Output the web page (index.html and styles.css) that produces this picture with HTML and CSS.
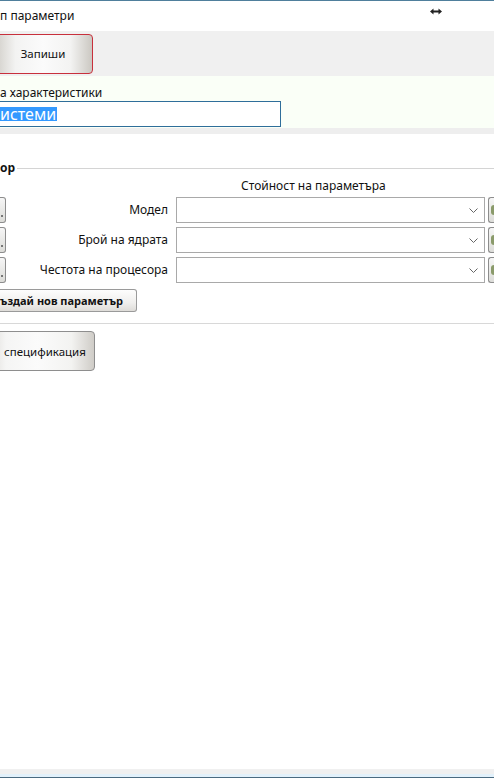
FILE: index.html
```html
<!DOCTYPE html>
<html lang="bg">
<head>
<meta charset="utf-8">
<title>Параметри</title>
<link rel="stylesheet" href="styles.css">
</head>
<body>
<div class="window">
  <div class="titlebar">
    <span class="title">п параметри</span>
    <svg class="resize" width="12" height="7" viewBox="0 0 12 7"><path d="M0 3.5 L3.5 0.5 L3.5 2.5 L8.5 2.5 L8.5 0.5 L12 3.5 L8.5 6.5 L8.5 4.5 L3.5 4.5 L3.5 6.5 Z" fill="#222"/></svg>
  </div>
  <div class="toolbar">
    <button class="btn btn-save">Запиши</button>
  </div>
  <div class="props">
    <div class="prop-label">а характеристики</div>
    <div class="textbox"><span class="sel">истеми</span></div>
  </div>
  <div class="band"></div>
  <div class="content">
    <div class="group-head">
      <span class="legend">ор</span>
      <span class="group-line"></span>
    </div>
    <div class="param-grid">
      <div></div><div></div><div class="colhead">Стойност на параметъра</div><div></div>

      <div class="mini mini-l"><i></i></div>
      <div class="plabel">Модел</div>
      <div class="combo"><svg width="9" height="5" viewBox="0 0 9 5"><path d="M0.5 0.5 L4.5 4.5 L8.5 0.5" fill="none" stroke="#666" stroke-width="1"/></svg></div>
      <div class="mini mini-r"><i></i></div>

      <div class="mini mini-l"><i></i></div>
      <div class="plabel">Брой на ядрата</div>
      <div class="combo"><svg width="9" height="5" viewBox="0 0 9 5"><path d="M0.5 0.5 L4.5 4.5 L8.5 0.5" fill="none" stroke="#666" stroke-width="1"/></svg></div>
      <div class="mini mini-r"><i></i></div>

      <div class="mini mini-l"><i></i></div>
      <div class="plabel">Честота на процесора</div>
      <div class="combo"><svg width="9" height="5" viewBox="0 0 9 5"><path d="M0.5 0.5 L4.5 4.5 L8.5 0.5" fill="none" stroke="#666" stroke-width="1"/></svg></div>
      <div class="mini mini-r"><i></i></div>
    </div>
    <button class="btn-new">ъздай нов параметър</button>
    <div class="rule"></div>
    <button class="btn btn-spec">спецификация</button>
  </div>
  <div class="statusbar"></div>
</div>
</body>
</html>
```

FILE: styles.css
```css
html, body {
  margin: 0;
  padding: 0;
  background: #ffffff;
}
body {
  width: 494px;
  height: 778px;
  overflow: hidden;
  font-family: "Noto Sans", "DejaVu Sans", sans-serif;
  font-size: 12px;
  color: #111;
}
.window {
  display: flex;
  flex-direction: column;
  height: 778px;
  overflow: hidden;
}
.titlebar {
  height: 30px;
  border-top: 1px solid #4f7f9c;
  display: flex;
  align-items: center;
  justify-content: space-between;
  padding-right: 52px;
  background: #ffffff;
}
.title {
  font-size: 12px;
  line-height: 16px;
}
.resize {
  margin-top: -9px;
}
.toolbar {
  height: 45px;
  background: #f0f0f0;
  display: flex;
  align-items: center;
}
.btn {
  font-family: inherit;
  font-size: 12px;
  color: #111;
  border-radius: 4px;
  padding: 0;
  cursor: default;
}
.btn-save {
  width: 100px;
  height: 40px;
  margin-left: -7px;
  font-size: 11.5px;
  border: 1px solid #c8303c;
  background: linear-gradient(to right, #cfccc6 0%, #f3f3f2 22%, #fbfbfb 50%, #f3f3f2 78%, #cbc8c2 100%);
}
.props {
  height: 52px;
  background: #fafff7;
  display: flex;
  flex-direction: column;
  padding-top: 9px;
  box-sizing: border-box;
}
.prop-label {
  font-size: 12px;
  line-height: 16px;
}
.textbox {
  width: 281px;
  height: 26px;
  box-sizing: border-box;
  border: 1px solid #2f6e9a;
  border-left: none;
  background: #ffffff;
  display: flex;
  align-items: center;
}
.sel {
  background: #3399ff;
  color: #ffffff;
  font-size: 16px;
  line-height: 14px;
  padding-right: 1px;
}
.band {
  height: 6px;
  background: #eeeeee;
}
.content {
  flex: 1;
  display: flex;
  flex-direction: column;
  align-items: flex-start;
}
.group-head {
  width: 494px;
  display: flex;
  align-items: center;
  margin-top: 28px;
  height: 12px;
}
.legend {
  font-weight: bold;
  font-size: 12px;
  line-height: 12px;
  margin-right: 2px;
}
.group-line {
  flex: 1;
  height: 1px;
  background: #d4d4d4;
}
.param-grid {
  width: 494px;
  display: grid;
  grid-template-columns: 6px 1fr 309px 9px;
  row-gap: 4px;
}
.colhead {
  padding-left: 65px;
  padding-top: 5px;
  font-size: 12px;
  line-height: 14px;
  white-space: nowrap;
}
.plabel {
  text-align: right;
  padding-right: 8px;
  font-size: 12px;
  line-height: 26px;
}
.combo {
  height: 26px;
  box-sizing: border-box;
  border: 1px solid #a9a9a9;
  background: #ffffff;
  display: flex;
  align-items: center;
  justify-content: flex-end;
  padding-right: 6px;
}
.mini {
  height: 26px;
  box-sizing: border-box;
  border: 1px solid #8d8d8d;
  background: linear-gradient(to bottom, #f6f6f6, #dcdcd8);
  position: relative;
}
.mini-l {
  border-left: none;
  border-radius: 0 3px 3px 0;
  width: 6px;
}
.mini-l i {
  position: absolute;
  left: 1px;
  top: 17px;
  width: 2px;
  height: 2px;
  background: #777;
}
.mini-r {
  border-right: none;
  border-radius: 3px 0 0 3px;
  width: 6px;
  margin-left: 3px;
}
.mini-r i {
  position: absolute;
  left: 2px;
  top: 7px;
  width: 4px;
  height: 10px;
  border-radius: 3px 0 0 3px;
  background: #8a9a6a;
}
.btn-new {
  margin-top: 6px;
  width: 137px;
  height: 23px;
  font-family: inherit;
  font-weight: bold;
  font-size: 11px;
  text-align: left;
  padding: 0;
  border: 1px solid #9a9a9a;
  border-left: none;
  border-radius: 0 3px 3px 0;
  background: linear-gradient(to bottom, #fdfdfd 0%, #f0efed 60%, #dedcd8 100%);
  color: #111;
}
.rule {
  width: 494px;
  height: 1px;
  background: #d8d8d8;
  margin-top: 11px;
}
.btn-spec {
  margin-top: 7px;
  width: 115px;
  height: 40px;
  margin-left: -20px;
  font-size: 11.5px;
  text-align: left;
  padding-left: 23px;
  border: 1px solid #8e8e8e;
  background: linear-gradient(to right, #d4d2cd 0%, #f5f5f4 22%, #fbfbfb 50%, #f3f3f1 80%, #cfccc7 100%);
}
.statusbar {
  height: 9px;
  box-sizing: border-box;
  background: linear-gradient(to bottom, #f0f0f0 0px, #f0f0f0 5px, #e2f1fb 5px, #e2f1fb 8px, #4a6a80 8px);
}
```
